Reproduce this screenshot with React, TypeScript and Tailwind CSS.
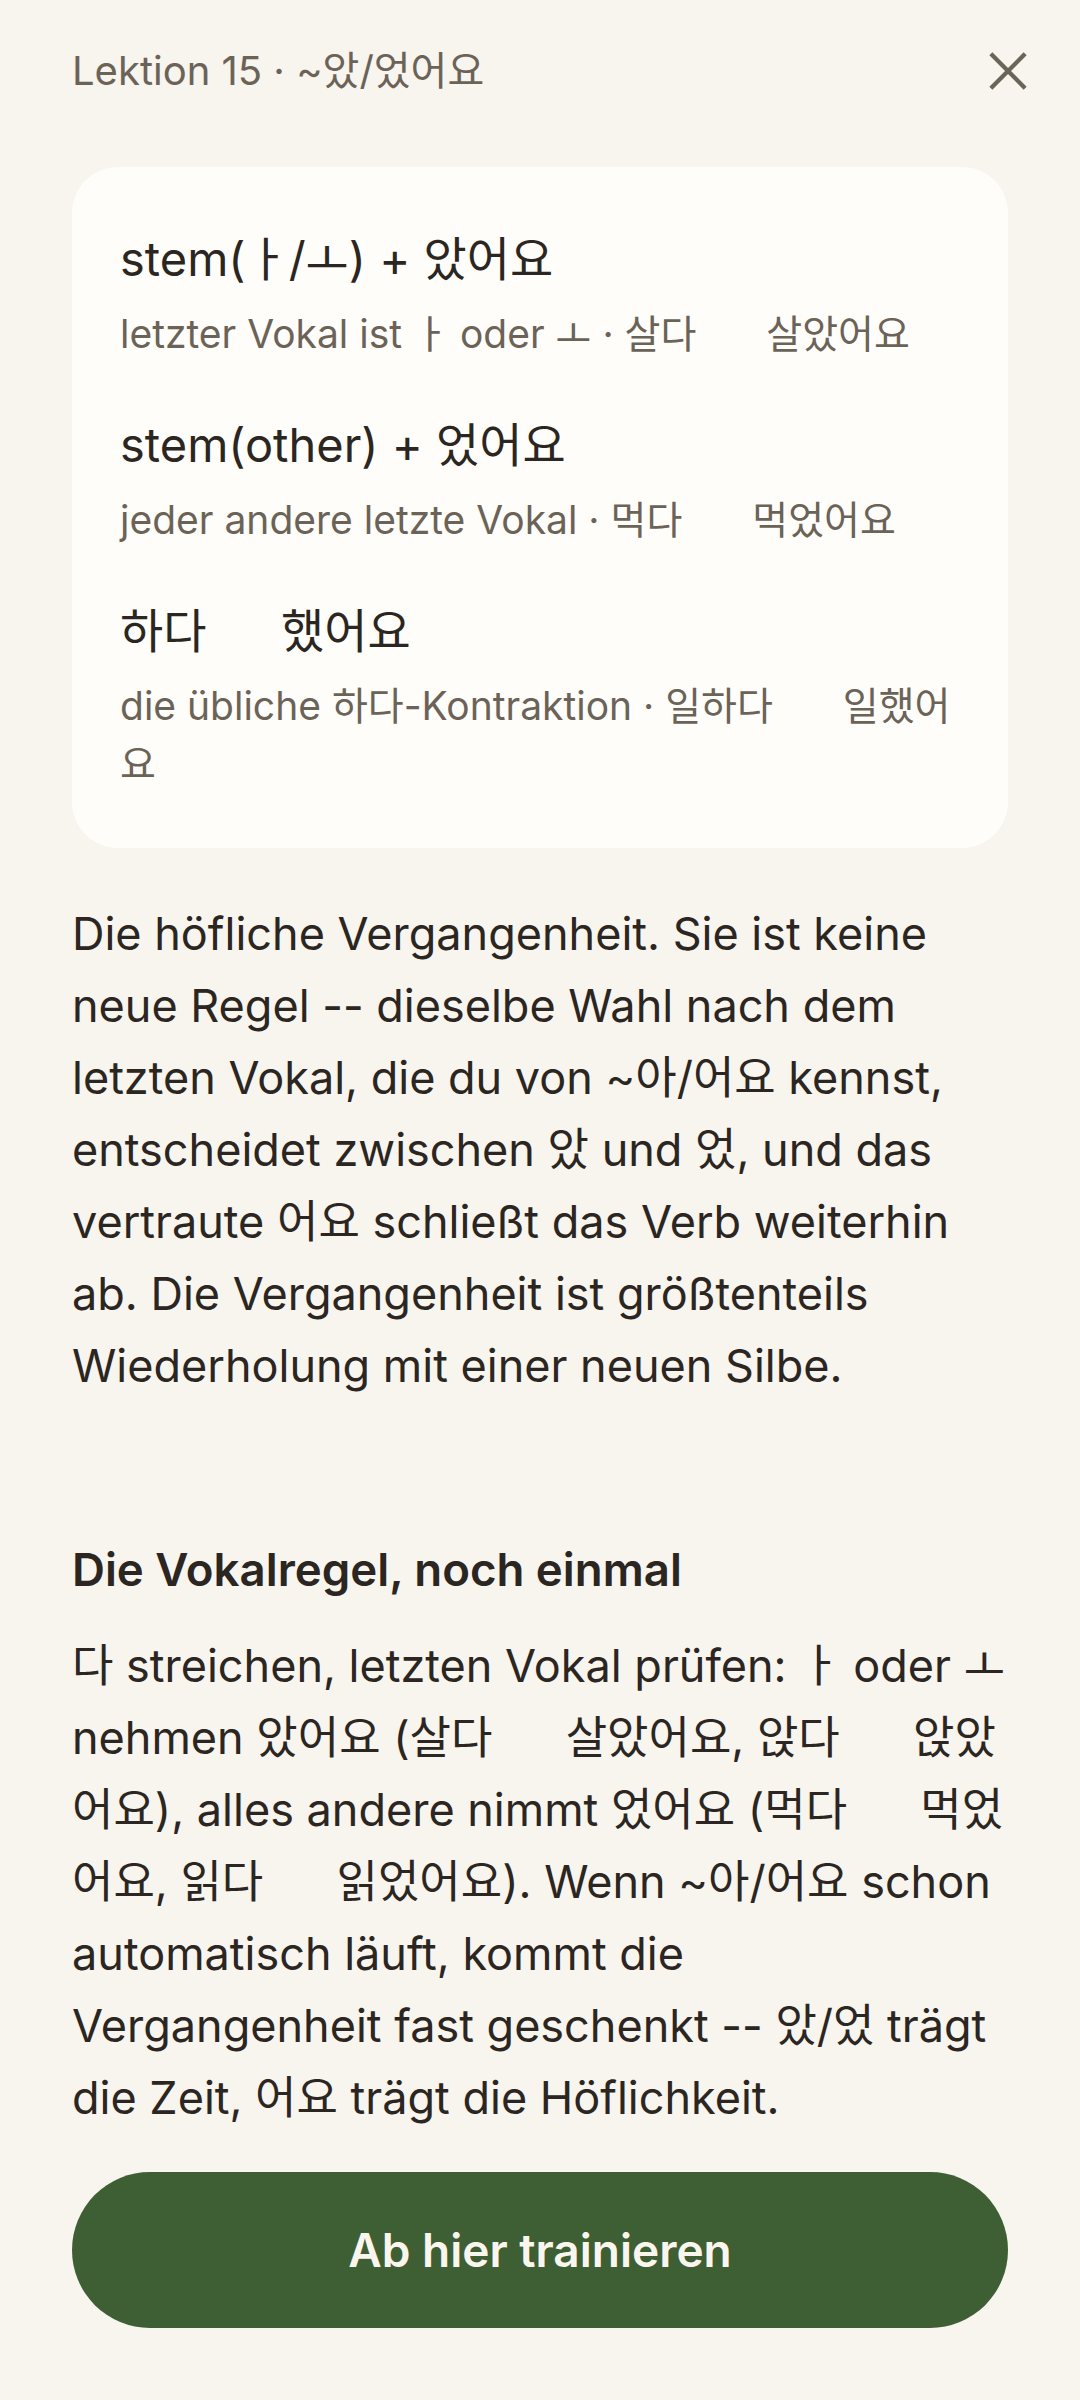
import React from 'react'

// placeholder where the arrow glyph sits (renders blank in the reference)
function Arrow() {
  return <span className="inline-block w-[48px]" />
}

const rules = [
  {
    title: <>stem(ㅏ/ㅗ) + 았어요</>,
    sub: (
      <>
        letzter Vokal ist ㅏ oder ㅗ · 살다 <Arrow /> 살았어요
      </>
    ),
  },
  {
    title: <>stem(other) + 었어요</>,
    sub: (
      <>
        jeder andere letzte Vokal · 먹다 <Arrow /> 먹었어요
      </>
    ),
  },
  {
    title: (
      <>
        하다 <Arrow /> 했어요
      </>
    ),
    sub: (
      <>
        die übliche 하다-Kontraktion · 일하다 <Arrow /> 일했어
        <br />요
      </>
    ),
  },
]

export default function App() {
  return (
    <div className="min-h-[2400px] w-[1080px] bg-[#f8f4ee] px-[72px] pt-[48px] font-['Inter','Noto_Sans_CJK_KR',sans-serif] text-[#2b2621]">
      {/* header */}
      <header className="flex h-[46px] items-center justify-between">
        <span className="text-[40px] leading-[46px] text-[#6b6358]">Lektion 15 · ~았/었어요</span>
        <button className="-mr-[20px] flex h-[40px] w-[40px] items-center justify-center" aria-label="Schließen">
          <svg width="42" height="42" viewBox="0 0 42 42" fill="none">
            <path d="M3 3L39 39M39 3L3 39" stroke="#6b6459" strokeWidth="4.5" />
          </svg>
        </button>
      </header>

      {/* rule card */}
      <section className="mt-[73px] rounded-[46px] bg-[#fffdf9] px-[48px] pt-[62px] pb-[55px]">
        {rules.map((r, i) => (
          <div key={i} className={i > 0 ? 'mt-[52px]' : ''}>
            <div className="text-[47px] leading-[60px] text-[#2b2621]">{r.title}</div>
            <div className="mt-4 text-[39px] leading-[58px] text-[#6b6358]">{r.sub}</div>
          </div>
        ))}
      </section>

      <p className="mt-[50px] text-[45px] leading-[72px]">
        Die höfliche Vergangenheit. Sie ist keine neue Regel -- dieselbe Wahl nach dem letzten Vokal, die du von
        ~아/어요 kennst, entscheidet zwischen 았 und 었, und das vertraute 어요 schließt das Verb weiterhin ab. Die
        Vergangenheit ist größtenteils Wiederholung mit einer neuen Silbe.
      </p>

      <h2 className="mt-[138px] text-[45.6px] font-semibold leading-[60px]">Die Vokalregel, noch einmal</h2>

      <p className="mt-[30px] text-[45px] leading-[72px]">
        다 streichen, letzten Vokal prüfen: ㅏ oder ㅗ
        <br />
        nehmen 았어요 (살다 <Arrow /> 살았어요, 앉다 <Arrow /> 앉았
        <br />
        어요), alles andere nimmt 었어요 (먹다 <Arrow /> 먹었
        <br />
        어요, 읽다 <Arrow /> 읽었어요). Wenn ~아/어요 schon
        <br />
        automatisch läuft, kommt die
        <br />
        Vergangenheit fast geschenkt -- 았/었 trägt
        <br />
        die Zeit, 어요 trägt die Höflichkeit.
      </p>

      <button className="mt-[38px] flex h-[156px] w-full items-center justify-center rounded-full bg-[#3e5e34] text-[46px] font-semibold text-[#faf6ee]">
        Ab hier trainieren
      </button>
    </div>
  )
}
